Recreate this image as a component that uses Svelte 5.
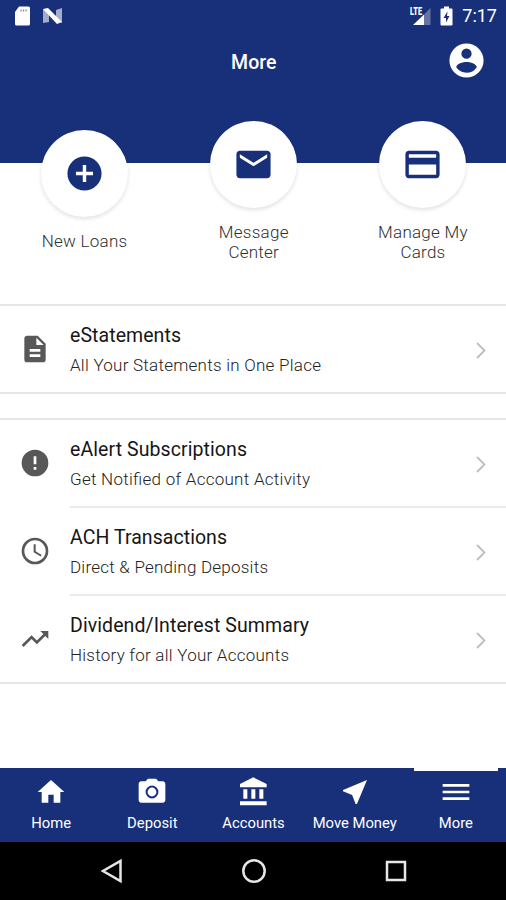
<script>
    const navy = '#18307a';

    const shortcuts = [
        {label: ['New Loans'], icon: 'add', low: true},
        {label: ['Message', 'Center'], icon: 'mail'},
        {label: ['Manage My', 'Cards'], icon: 'card'}
    ];

    const groups = [
        [
            {title: 'eStatements', desc: 'All Your Statements in One Place', icon: 'file', tw: 111, dw: 251}
        ],
        [
            {title: 'eAlert Subscriptions', desc: 'Get Notified of Account Activity', icon: 'alert', tw: 177, dw: 240},
            {title: 'ACH Transactions', desc: 'Direct & Pending Deposits', icon: 'clock', tw: 157, dw: 198},
            {title: 'Dividend/Interest Summary', desc: 'History for all Your Accounts', icon: 'trend', tw: 239, dw: 219}
        ]
    ];

    const tabs = [
        {label: 'Home', icon: 'home'},
        {label: 'Deposit', icon: 'camera'},
        {label: 'Accounts', icon: 'bank'},
        {label: 'Move Money', icon: 'send'},
        {label: 'More', icon: 'menu', active: true}
    ];

    const icons = {
        user: 'M12 2a10 10 0 1 0 0 20a10 10 0 0 0 0-20zm0 3a3 3 0 1 1 0 6a3 3 0 0 1 0-6zm0 14.2c-2.5 0-4.7-1.28-6-3.22.03-1.99 4-3.08 6-3.08s5.97 1.09 6 3.08a7.2 7.2 0 0 1-6 3.22z',
        add: 'M12 2a10 10 0 1 0 0 20a10 10 0 0 0 0-20zm5 11h-4v4h-2v-4H7v-2h4V7h2v4h4v2z',
        mail: 'M20 4H4c-1.1 0-2 .9-2 2v12c0 1.1.9 2 2 2h16c1.1 0 2-.9 2-2V6c0-1.1-.9-2-2-2zm0 4l-8 5-8-5V6l8 5 8-5v2z',
        card: 'M20 4H4c-1.11 0-2 .89-2 2v12c0 1.11.89 2 2 2h16c1.11 0 2-.89 2-2V6c0-1.11-.89-2-2-2zm0 14H4v-6h16v6zm0-10H4V6h16v2z',
        file: 'M14 2H6c-1.1 0-2 .9-2 2v16c0 1.1.9 2 2 2h12c1.1 0 2-.9 2-2V8l-6-6zm2 16H8v-2h8v2zm0-4H8v-2h8v2zm-3-5V3.5L18.5 9H13z',
        alert: 'M12 2a10 10 0 1 0 0 20a10 10 0 0 0 0-20zm1 15h-2v-2h2v2zm0-4h-2V7h2v6z',
        clock: 'M12 2a10 10 0 1 0 0 20a10 10 0 0 0 0-20zm0 18a8 8 0 1 1 0-16a8 8 0 0 1 0 16zm.5-13H11v6l5.25 3.15.75-1.23-4.5-2.67z',
        trend: 'M16 6l2.29 2.29-4.88 4.88-4-4L2 16.59 3.41 18l6-6 4 4 6.3-6.29L22 12V6z',
        home: 'M10 20v-6h4v6h5v-8h3L12 3 2 12h3v8z',
        camera: 'M9 2L7.17 4H4c-1.1 0-2 .9-2 2v12c0 1.1.9 2 2 2h16c1.1 0 2-.9 2-2V6c0-1.1-.9-2-2-2h-3.17L15 2H9zm3 14.8a4.8 4.8 0 1 1 0-9.6a4.8 4.8 0 0 1 0 9.6zm0-1.5a3.300 3.300 0 1 0 0-6.600a3.300 3.300 0 0 0 0 6.600z',
        bank: 'M4 10v7h3v-7H4zm6 0v7h3v-7h-3zM1.500 22h20v-3h-20v3zm14.500-12v7h3v-7h-3zM11.500 1l-10 5v2.500h20V6l-10-5z',
        send: 'M21 3L3 10.53v.98l6.84 2.65L12.48 21h.98L21 3z',
        menu: 'M2 18h20v-2H2v2zm0-5h20v-2H2v2zm0-7v2h20V6H2z'
    };
</script>

{#snippet icon(name, size, color)}
    <svg width={size} height={size} viewBox="0 0 24 24" fill={color} fill-rule="evenodd"><path d={icons[name]} /></svg>
{/snippet}

{#snippet line(text, width)}
    <svg class="line" height="26"><text x="0" y="19" textLength={width}>{text}</text></svg>
{/snippet}

<div class="screen">
    <header>
        <div class="status">
            <svg width="18" height="20" viewBox="0 0 18 20"><path d="M6 .5h9.500a1.500 1.500 0 0 1 1.500 1.500v16a1.500 1.500 0 0 1-1.500 1.500h-12A1.500 1.500 0 0 1 2 18V6z" fill="#fff" /><path d="M8 3.500v2M10.500 3.500v2M13 3.500v2" stroke="#7f8bb2" stroke-width="1.300" /></svg>
            <svg class="nougat" width="20" height="16" viewBox="0 0 20 16"><path d="M0 1l6 4v9l-6 1zM13 2l6-2v15l-6-3z" fill="#a3acca" /><path d="M0 1l5-1 14 14-5 2z" fill="#fff" /></svg>
            <div class="spacer"></div>
            <svg class="signal" width="24" height="20" viewBox="0 0 24 20"><path d="M22.500 2v17H16V8.500z" fill="#6674a4" /><path d="M16 8.500V19H5z" fill="#fff" /><text x="2" y="9" textLength="12" lengthAdjust="spacingAndGlyphs">LTE</text></svg>
            <svg class="battery" width="13" height="20" viewBox="0 0 13 20"><path d="M4 .5h5v2h2.500q1 0 1 1v15q0 1-1 1h-10q-1 0-1-1v-15q0-1 1-1H4z" fill="#fff" /><path d="M7.500 5.500L3.500 12h2.500v4.500L9.500 10H7z" fill={navy} /></svg>
            <span class="time">7:17</span>
        </div>
        <div class="title-bar">
            <span></span>
            <h1>More</h1>
            <button aria-label="Profile">{@render icon('user', 41, '#fff')}</button>
        </div>
    </header>

    <section class="shortcuts">
        {#each shortcuts as item}
            <div class="shortcut" class:low={item.low}>
                <div class="circle">{@render icon(item.icon, 41, navy)}</div>
                <div class="label">
                    {#each item.label as part}
                        <div>{part}</div>
                    {/each}
                </div>
            </div>
        {/each}
    </section>

    <main>
        {#each groups as group}
            <div class="group">
                {#each group as row}
                    <div class="row">
                        <div class="row-icon">{@render icon(row.icon, 32, '#585858')}</div>
                        <div class="row-body">
                            <div class="row-text">
                                <div class="row-title">{@render line(row.title, row.tw)}</div>
                                <div class="row-desc">{@render line(row.desc, row.dw)}</div>
                            </div>
                            <svg class="chevron" width="10" height="17" viewBox="0 0 10 17"><path d="M1 1l7.500 7.500L1 16" /></svg>
                        </div>
                    </div>
                {/each}
            </div>
        {/each}
    </main>

    <nav class="tabs">
        {#each tabs as tab}
            <div class="tab" class:active={tab.active}>
                {@render icon(tab.icon, 32, '#fff')}
                <span>{tab.label}</span>
            </div>
        {/each}
    </nav>

    <footer>
        <svg width="24" height="26" viewBox="0 0 24 26"><path d="M20.500 3v20L3 13z" /></svg>
        <svg width="26" height="26" viewBox="0 0 26 26"><circle cx="13" cy="13" r="10.700" /></svg>
        <svg width="24" height="26" viewBox="0 0 24 26"><path d="M3 4h18v18H3z" /></svg>
    </footer>
</div>

<style>
:global(body) {
    margin: 0;
    background: #fff;
}
.screen {
    display: flex;
    flex-direction: column;
    width: 506px;
    height: 900px;
    overflow: hidden;
    background: #fff;
    font-family: Roboto, sans-serif;
}
svg {
    display: block;
    flex: none;
}
header {
    height: 163px;
    background: #18307a;
    color: #fff;
}
.status {
    display: flex;
    align-items: center;
    height: 31px;
    padding: 0 9px 0 13px;
}
.nougat {
    margin-left: 12px;
}
.spacer {
    flex: 1;
}
.signal text {
    font-size: 10px;
    font-weight: 900;
    fill: #fff;
}
.battery {
    margin-left: 8px;
}
.time {
    margin-left: 9px;
    font-size: 18px;
    line-height: 31px;
}
.title-bar {
    display: grid;
    grid-template-columns: 1fr auto 1fr;
    align-items: center;
    height: 60px;
    padding-right: 19.500px;
    padding-left: 20px;
}
h1 {
    margin: 0;
    padding: 2px 0 0 1px;
    font-size: 19.500px;
    font-weight: 500;
}
button {
    justify-self: end;
    margin-top: -1px;
    padding: 0;
    border: 0;
    background: none;
}
.shortcuts {
    display: flex;
    height: 183px;
    margin-top: -42px;
    margin-right: -1.500px;
}
.shortcut {
    display: flex;
    flex: 1;
    flex-direction: column;
    align-items: center;
}
.low {
    padding-top: 9.400px;
}
.circle {
    display: flex;
    align-items: center;
    justify-content: center;
    width: 87px;
    height: 87px;
    border-radius: 50%;
    background: #fff;
    box-shadow: 0 2px 4px rgba(0, 0, 0, .12);
}
.label {
    margin-top: 14px;
    color: #303030;
    font-size: 17px;
    font-weight: 300;
    letter-spacing: .25px;
    line-height: 20px;
    text-align: center;
}
main {
    flex: 1;
}
.group {
    border-top: 2px solid #e6e6e6;
    border-bottom: 2px solid #e6e6e6;
}
.group + .group {
    margin-top: 24px;
}
.row {
    display: flex;
    height: 86px;
}
.row + .row {
    height: 88px;
}
.row-icon {
    display: flex;
    align-items: center;
    width: 51px;
    padding-left: 19px;
}
.row + .row .row-icon {
    padding-top: 1px;
}
.row-body {
    display: flex;
    flex: 1;
    align-items: center;
    padding-right: 20px;
}
.row + .row .row-body {
    border-top: 2px solid #ebebeb;
}
.row-text {
    flex: 1;
    padding-top: 2px;
}
.line {
    width: 300px;
    overflow: visible;
}
.row-title {
    height: 29px;
    font-size: 19.500px;
    fill: #161616;
}
.row-desc {
    height: 26px;
    font-size: 17px;
    font-weight: 300;
    fill: #222;
}
.chevron {
    margin-top: 2px;
    fill: none;
    stroke: #bdbdbd;
    stroke-width: 1.800;
}
.tabs {
    display: flex;
    height: 74px;
    background: #18307a;
    color: #fff;
}
.tab {
    display: flex;
    flex: 1;
    flex-direction: column;
    align-items: center;
    padding-top: 5px;
    padding-left: 1px;
    border-top: 3px solid transparent;
}
.tab.active {
    position: relative;
}
.tab.active::before {
    position: absolute;
    top: -3px;
    right: 8px;
    left: 9px;
    height: 3px;
    background: #fff;
    content: '';
}
.tab span {
    margin-top: 5px;
    font-size: 14.800px;
    line-height: 20px;
    white-space: nowrap;
}
footer {
    display: flex;
    align-items: center;
    justify-content: center;
    gap: 117px;
    height: 58px;
    padding-left: 1px;
    background: #000;
}
footer svg {
    fill: none;
    stroke: #e6e6e6;
    stroke-width: 2.500;
}
</style>
